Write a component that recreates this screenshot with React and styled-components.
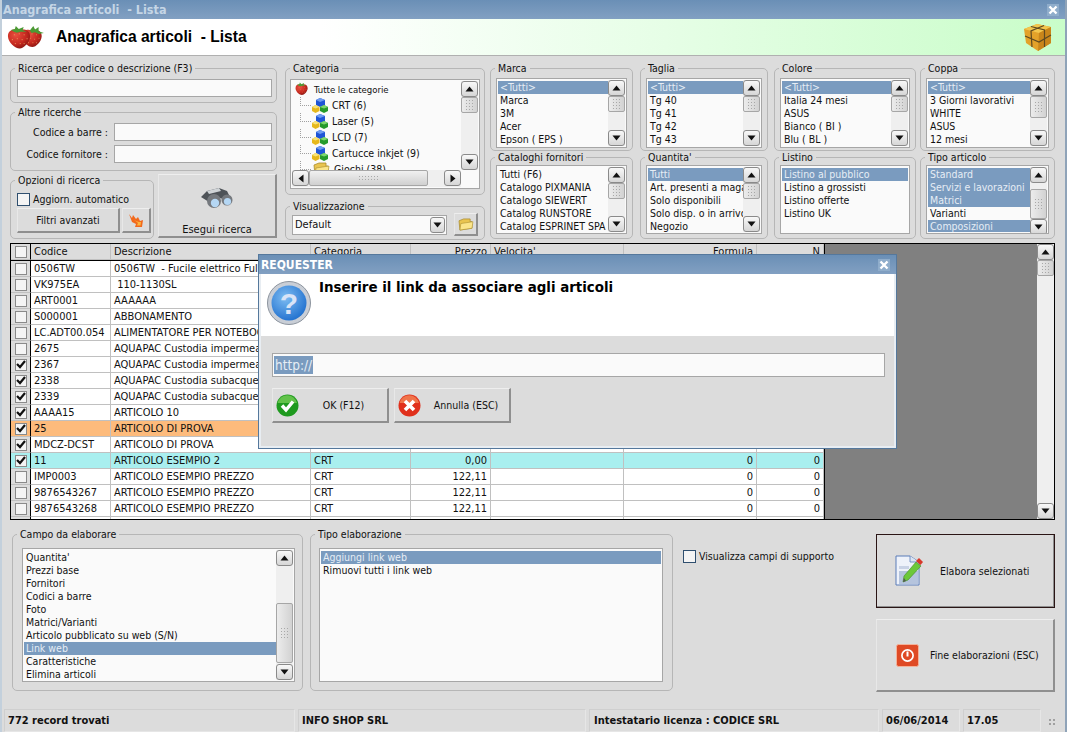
import React from 'react';
import styled, { createGlobalStyle } from 'styled-components';

const GlobalStyle = createGlobalStyle`
  html, body {
    margin: 0;
    padding: 0;
    background: #dcdcdc;
    overflow: hidden;
  }
  body {
    font-family: "DejaVu Sans Condensed", "DejaVu Sans", "Liberation Sans", sans-serif;
    font-size: 10.5px;
    color: #111111;
  }
`;

const Window = styled.div`
  position: relative;
  box-sizing: border-box;
  width: 1067px;
  height: 732px;
  display: flex;
  flex-direction: column;
  background: #dcdcdc;
  overflow: hidden;
  border-right: 2px solid #8fa3b8;
  border-left: 2px solid #c3d0dc;
`;

const TitleBar = styled.div`
  height: 19px;
  margin: 0 -2px;
  flex: none;
  display: flex;
  align-items: center;
  justify-content: space-between;
  padding: 0 8px 0 3px;
  background: linear-gradient(#6a8fb6, #82a0c2);
  color: #c5d6e6;
  font-size: 12.5px;
  font-weight: 700;
  white-space: pre;
`;

const CloseBox = styled.span`
  width: 12px;
  height: 12px;
  display: flex;
  align-items: center;
  justify-content: center;
  background: #8fadcb;
`;

const Banner = styled.div`
  height: 36px;
  flex: none;
  display: flex;
  align-items: center;
  padding: 0 12px 0 5px;
  background: linear-gradient(90deg, #ffffff 0%, #ffffff 30%, #c9fdc9 100%);
  border-bottom: 1px solid #b0b0b0;
`;

const BannerTitle = styled.h1`
  flex: 1;
  margin: 0 0 0 11px;
  font-family: "Liberation Sans", Arial, sans-serif;
  font-size: 15.6px;
  font-weight: 700;
  color: #000000;
  white-space: pre;
`;

const Filters = styled.div`
  box-sizing: border-box;
  height: 184px;
  flex: none;
  display: flex;
  padding: 6px 0 0 8px;
`;

const Column = styled.div`
  width: ${(p) => p.$w}px;
  flex: none;
  display: flex;
  flex-direction: column;
  gap: ${(p) => p.$gap || 0}px;
  margin-right: ${(p) => p.$mr || 0}px;
`;

const Group = styled.fieldset`
  box-sizing: border-box;
  margin: 0;
  min-width: 0;
  width: ${(p) => (p.$w ? `${p.$w}px` : '100%')};
  height: ${(p) => p.$h}px;
  flex: none;
  padding: 0;
  border: 1px solid #b6b6b6;
  border-radius: 5px;
`;

const Legend = styled.legend`
  padding: 0 3px;
  margin-left: 4px;
  line-height: 13px;
`;

const GroupBody = styled.div`
  padding: ${(p) => p.$pad || '3px 5px 0 5px'};
`;

const TextField = styled.div`
  box-sizing: border-box;
  height: ${(p) => p.$h || 18}px;
  width: ${(p) => (p.$w ? `${p.$w}px` : 'auto')};
  background: #fafafa;
  border: 1.5px solid #a6a6a6;
`;

const FieldRow = styled.div`
  display: flex;
  align-items: center;
  justify-content: flex-end;
  gap: 6px;
  margin-bottom: 4px;
`;

const OptionsRow = styled.div`
  display: flex;
  gap: 4px;
`;

const FilterBtns = styled.div`
  display: flex;
  gap: 2px;
  margin-top: 2px;
`;

const CheckLine = styled.label`
  display: flex;
  align-items: center;
  gap: 3px;
  height: 14px;
`;

const CheckBox = styled.span`
  box-sizing: border-box;
  width: ${(p) => p.$s || 13}px;
  height: ${(p) => p.$s || 13}px;
  flex: none;
  display: flex;
  align-items: center;
  justify-content: center;
  background: #f4f4f4;
  border: 1px solid ${(p) => p.$border || '#8a8a8a'};
`;

const Btn = styled.div`
  box-sizing: border-box;
  width: ${(p) => (p.$w ? `${p.$w}px` : 'auto')};
  height: ${(p) => p.$h}px;
  flex: none;
  display: flex;
  align-items: center;
  justify-content: center;
  gap: ${(p) => p.$gap || 0}px;
  background: #dcdcdc;
  border-style: solid;
  border-width: 1px 2px 2px 1px;
  border-color: #eeeeee #8f8f8f #8f8f8f #e8e8e8;
  outline: ${(p) => (p.$default ? '1px solid #2a1515' : 'none')};
  outline-offset: -1px;
`;

const SearchBtn = styled(Btn)`
  flex-direction: column;
  justify-content: flex-end;
  gap: 14px;
  font-size: 11px;
`;

const ListFrame = styled.div`
  box-sizing: border-box;
  height: ${(p) => p.$h}px;
  display: flex;
  padding: 1px;
  background: #fafafa;
  border: 1.5px solid #a6a6a6;
  overflow: hidden;
`;

const ListRows = styled.div`
  flex: 1;
  min-width: 0;
  padding-top: 1px;
  overflow: hidden;
`;

const ListRow = styled.div`
  height: 13px;
  line-height: 13px;
  padding-left: 2px;
  white-space: nowrap;
  overflow: hidden;
  background: ${(p) => (p.$on ? '#7a9bbf' : 'transparent')};
  color: ${(p) => (p.$on ? '#e6edf5' : '#111111')};
`;

const VBar = styled.div`
  width: 17px;
  flex: none;
  display: flex;
  flex-direction: column;
  background: #efefef;
`;

const HBar = styled.div`
  height: 17px;
  flex: none;
  display: flex;
  background: #efefef;
  margin-right: 17px;
`;

const ArrowBtn = styled.div`
  box-sizing: border-box;
  width: 17px;
  height: 16px;
  flex: none;
  display: flex;
  align-items: center;
  justify-content: center;
  background: linear-gradient(#f8f8f8, #d6d6d6);
  border: 1px solid #8a8a8a;
  border-radius: 3px;
`;

const Thumb = styled.div`
  box-sizing: border-box;
  flex: none;
  ${(p) => (p.$horizontal ? `width: ${p.$size}px; height: 16px;` : `height: ${p.$size}px;`)}
  margin-${(p) => (p.$horizontal ? 'left' : 'top')}: ${(p) => p.$before || 0}px;
  display: flex;
  align-items: center;
  justify-content: center;
  background: linear-gradient(${(p) => (p.$horizontal ? '#f0f0f0, #d0d0d0' : '90deg, #ececec, #d2d2d2')});
  border: 1px solid #a6a6a6;
  border-radius: 2px;
`;

const Grip = styled.span`
  width: ${(p) => (p.$horizontal ? 21 : 9)}px;
  height: ${(p) => (p.$horizontal ? 6 : 12)}px;
  background-image: radial-gradient(#a8a8a8 0.7px, transparent 0.8px);
  background-size: 3px 3px;
`;

const Spacer = styled.div`
  flex: 1;
`;

const TreeFrame = styled.div`
  box-sizing: border-box;
  height: ${(p) => p.$h}px;
  display: flex;
  flex-direction: column;
  padding: 1px;
  background: #fafafa;
  border: 1.5px solid #a6a6a6;
`;

const TreeBody = styled.div`
  flex: 1;
  min-height: 0;
  display: flex;
  overflow: hidden;
`;

const TreeRows = styled.div`
  flex: 1;
  overflow: hidden;
`;

const TreeRow = styled.div`
  height: 16px;
  display: flex;
  align-items: center;
  gap: ${(p) => (p.$root ? 5 : 1)}px;
  padding-left: ${(p) => (p.$root ? 3 : 8)}px;
  white-space: nowrap;
  font-size: ${(p) => (p.$root ? 9.5 : 10.5)}px;
`;

const TreeDots = styled.span`
  align-self: stretch;
  width: 10px;
  height: 8px;
  border-left: 1px dotted #a0a0a0;
  border-bottom: 1px dotted #a0a0a0;
`;

const TreeLabel = styled.span`
  margin-left: 3px;
`;

const SelectRow = styled.div`
  display: flex;
  align-items: center;
  gap: 7px;
  padding: 0 0 0 6px;
`;

const SelectBox = styled.div`
  box-sizing: border-box;
  width: 155px;
  height: 20px;
  display: flex;
  align-items: center;
  justify-content: space-between;
  padding: 0 1px 0 2px;
  background: #fafafa;
  border: 1.5px solid #a6a6a6;
  font-size: 11px;
`;

const SelectArrow = styled(ArrowBtn)`
  width: 15px;
  height: 16px;
`;

const TableBox = styled.div`
  box-sizing: border-box;
  height: 277px;
  flex: none;
  margin: 3px 10px 0 8px;
  display: flex;
  border: 1px solid #000000;
  background: #808080;
  overflow: hidden;
  font-size: 11px;
`;

const Grid = styled.div`
  width: 814px;
  flex: none;
  background: #ffffff;
  border-right: 1px solid #000000;
  box-sizing: border-box;
`;

const HeadRow = styled.div`
  display: grid;
  grid-template-columns: 20px 80px 200px 100px 80px 133px 133px 67px;
  height: 16px;
  background: #dcdcdc;
  border-bottom: 1px solid #000000;
`;

const BodyRow = styled.div`
  display: grid;
  grid-template-columns: 20px 80px 200px 100px 80px 133px 133px 67px;
  height: 16px;
  box-sizing: border-box;
  background: ${(p) => p.$bg || '#ffffff'};
`;

const Cell = styled.div`
  box-sizing: border-box;
  padding: 0 3px;
  line-height: 15px;
  white-space: pre;
  overflow: hidden;
  text-align: ${(p) => (p.$right ? 'right' : 'left')};
  border-right: 1px solid #c0c0c0;
  border-bottom: 1px solid #c0c0c0;
`;

const TickCell = styled.div`
  box-sizing: border-box;
  display: flex;
  align-items: center;
  justify-content: center;
  background: ${(p) => p.$bg || '#dcdcdc'};
  border-right: 1px solid #000000;
  border-bottom: 1px solid #c0c0c0;
`;

const GrayArea = styled.div`
  flex: 1;
`;

const Bottom = styled.div`
  flex: none;
  display: flex;
  padding: 8px 10px 0 10px;
  height: 189px;
  box-sizing: border-box;
`;

const TipoGroup = styled(Group)`
  margin-left: 7px;
`;

const SupportCheck = styled(CheckLine)`
  margin: 21px 0 0 10px;
  align-self: flex-start;
`;

const ActionColumn = styled.div`
  margin-left: auto;
  padding-top: 6px;
  width: 179px;
  display: flex;
  flex-direction: column;
  gap: 11px;
`;

const ActionBtn = styled(Btn)`
  justify-content: flex-start;
  padding-left: ${(p) => p.$pl}px;
  gap: ${(p) => p.$gap}px;
`;

const StatusBar = styled.div`
  height: 23px;
  flex: none;
  display: flex;
  gap: 3px;
  padding-left: 2px;
  font-size: 11px;
`;

const StatusCell = styled.div`
  box-sizing: border-box;
  width: ${(p) => p.$w}px;
  display: flex;
  align-items: center;
  padding-left: ${(p) => p.$pl || 3}px;
  font-weight: 700;
  border: 1px solid #cfcfcf;
  border-right-color: #e6e6e6;
  border-bottom-color: #e6e6e6;
`;

const SizeGrip = styled.span`
  width: 8px;
  height: 8px;
  margin: 9px 0 0 4px;
  background-image: radial-gradient(#a0a0a0 0.8px, transparent 0.9px);
  background-size: 4px 4px;
`;

const Dialog = styled.div`
  position: absolute;
  left: 256px;
  top: 254px;
  box-sizing: border-box;
  width: 639px;
  height: 195px;
  display: flex;
  flex-direction: column;
  background: #dcdcdc;
  border: 1px solid #55789c;
  box-shadow: inset 0 0 0 2px #e8edf2;
`;

const DialogTitle = styled(TitleBar)`
  height: 19px;
  margin: 0;
  color: #ffffff;
  padding: 0 6px 0 2px;
  font-size: 12px;
`;

const DialogHead = styled.div`
  height: 62px;
  flex: none;
  display: flex;
  gap: 7px;
  padding: 5px 2px 0 5px;
  margin: 0 2px;
  background: #ffffff;
  box-sizing: border-box;
`;

const DialogText = styled.div`
  font-size: 14.9px;
  font-weight: 700;
  line-height: 15px;
  padding-top: 1px;
  color: #000000;
`;

const DialogBody = styled.div`
  padding: 17px 11px 0 13px;
  display: flex;
  flex-direction: column;
  gap: 11px;
`;

const UrlField = styled(TextField)`
  height: 24px;
  display: flex;
  align-items: center;
  padding-left: 1px;
  font-size: 13.5px;
`;

const Marked = styled.span`
  background: #7a9bbf;
  color: #e6edf5;
  padding: 1px;
`;

const DialogBtns = styled.div`
  display: flex;
  gap: 5px;
`;

const DialogBtnLabel = styled.span`
  flex: 1;
  text-align: center;
  padding-left: ${(p) => p.$pl || 0}px;
`;

const DialogBtn = styled(Btn)`
  padding: 0 3px;
`;

const Up = () => (
  <svg width="9" height="6" viewBox="0 0 9 6"><path d="M4.5 0.5 L8.5 5.5 H0.5 Z" fill="#111" /></svg>
);
const Down = () => (
  <svg width="9" height="6" viewBox="0 0 9 6"><path d="M0.5 0.5 H8.5 L4.5 5.5 Z" fill="#111" /></svg>
);
const Left = () => (
  <svg width="6" height="9" viewBox="0 0 6 9"><path d="M5.5 0.5 V8.5 L0.5 4.5 Z" fill="#111" /></svg>
);
const Right = () => (
  <svg width="6" height="9" viewBox="0 0 6 9"><path d="M0.5 0.5 L5.5 4.5 L0.5 8.5 Z" fill="#111" /></svg>
);

const Tick = () => (
  <svg width="10" height="9" viewBox="0 0 10 9">
    <path d="M1 4 L4 7 L9 1" fill="none" stroke="#111" strokeWidth="2.2" />
  </svg>
);

const CloseX = () => (
  <svg width="10" height="10" viewBox="0 0 10 10">
    <path d="M1.5 1.5 L8.5 8.5 M8.5 1.5 L1.5 8.5" stroke="#fff" strokeWidth="2.4" />
  </svg>
);

const BerryDefs = () => (
  <defs>
    <radialGradient id="berry" cx="0.35" cy="0.3" r="0.8">
      <stop offset="0" stopColor="#e8503f" />
      <stop offset="0.6" stopColor="#c5281f" />
      <stop offset="1" stopColor="#7d1410" />
    </radialGradient>
  </defs>
);

const Strawberry = ({ scale = 1, x = 0, y = 0, leafRight }) => (
  <g transform={`translate(${x} ${y}) scale(${scale})`}>
    <path d="M12 5 C18 3 24 6 23.5 12 C23 18 17 24 13 24 C8 24 1.5 18 1 12 C0.5 6 6 3 12 5 Z" fill="url(#berry)" />
    <path d="M7 10 h1 M12 9 h1 M17 10 h1 M5 15 h1 M10 14 h1 M15 15 h1 M20 14 h1 M8 19 h1 M13 19 h1 M17 19 h1" stroke="#f1b36a" strokeWidth="0.8" />
    {leafRight ? (
      <path d="M10 5 L14 0 L16 4 L20 1 L20 6 L26 8 L20 9 L16 7 L12 8 Z" fill="#4c9a34" />
    ) : (
      <path d="M4 5 L8 4 L9 1 L12 4 L17 2 L16 5 L20 7 L14 7 L10 8 L7 7 Z" fill="#4c9a34" />
    )}
  </g>
);

const LogoBerries = () => (
  <svg width="38" height="26" viewBox="0 0 38 26">
    <BerryDefs />
    <Strawberry scale={0.88} x={14} y={2} leafRight />
    <Strawberry scale={0.98} x={0} y={1} />
  </svg>
);

const CubeGold = () => (
  <svg width="30" height="30" viewBox="0 0 30 30">
    <path d="M14 2 L28 5 L28 21 L15 29 L3 21 L1 7 Z" fill="#e3a22a" />
    <path d="M14 2 L28 5 L16 11 L1 7 Z" fill="#f2c64e" />
    <path d="M16 11 L28 5 L28 21 L15 29 Z" fill="#c9861a" />
    <path d="M8 4.5 L21.5 8 V25 M21 3.5 L8 9 L9 25 M2 14 L16 20 L28 13" fill="none" stroke="#5f4a20" strokeWidth="1.2" />
  </svg>
);

const MiniCubes = () => (
  <svg width="16" height="15" viewBox="0 0 16 15">
    <path d="M4 2 L8 0 L13 2 V7 L8 9 L4 7 Z" fill="#1f55d6" />
    <path d="M4 2 L8 0 L13 2 L8 4 Z" fill="#6f9cf0" />
    <path d="M0 9 L3.5 7 L7.5 9 V13 L3.5 15 L0 13 Z" fill="#e6b81c" />
    <path d="M0 9 L3.5 7 L7.5 9 L3.5 10.5 Z" fill="#f7e27a" />
    <path d="M8 9 L12 7 L16 9 V13 L12 15 L8 13 Z" fill="#259a2a" />
    <path d="M8 9 L12 7 L16 9 L12 10.5 Z" fill="#7fd66f" />
  </svg>
);

const FolderIcon = ({ size = 14 }) => (
  <svg width={size + 4} height={size} viewBox="0 0 18 14">
    <path d="M2 3 L7 1 L14 1 V4 H16 V11 L3 13 Z" fill="#e9c44f" stroke="#a88b2c" strokeWidth="0.8" />
    <path d="M3 13 L4 6 L17 4 L16 11 Z" fill="#fbe58a" stroke="#a88b2c" strokeWidth="0.6" />
  </svg>
);

const Binoculars = () => (
  <svg width="32" height="21" viewBox="0 0 32 21">
    <path d="M0 9 L6 3 L18 0 L26 3 L31 13 L22 11 L16 9 L8 14 Z" fill="#4e5358" />
    <path d="M6 3 L18 0 L20 3 L8 6 Z" fill="#cfd3d6" />
    <circle cx="13" cy="13" r="7" fill="#75797e" />
    <circle cx="26" cy="12" r="5.5" fill="#75797e" />
    <circle cx="14" cy="15" r="4.2" fill="#b5d7f4" />
    <circle cx="26.5" cy="13.5" r="3.6" fill="#b5d7f4" />
  </svg>
);

const Flame = () => (
  <svg width="16" height="15" viewBox="0 0 16 15">
    <path d="M1 1 L4 5 L5 2 L8 6 L10 4 L12 8 L15 7 L14 14 L7 14 L8 11 L4 9 Z" fill="#f2691c" />
    <path d="M5 6 L8 8 L11 9 L13 9 L12.5 12.5 L9 12.5 L10 10 Z" fill="#fcb53c" />
  </svg>
);

const QuestionIcon = () => (
  <svg width="46" height="48" viewBox="0 0 46 48">
    <defs>
      <radialGradient id="qblue" cx="0.4" cy="0.35" r="0.7">
        <stop offset="0" stopColor="#7dbcf2" />
        <stop offset="1" stopColor="#1f6fce" />
      </radialGradient>
    </defs>
    <circle cx="23" cy="24" r="21.5" fill="#c9ced6" stroke="#8c949e" strokeWidth="1" />
    <circle cx="23" cy="24" r="17.5" fill="url(#qblue)" />
    <text x="23" y="35" textAnchor="middle" fontFamily="Liberation Sans, sans-serif" fontSize="30" fontWeight="700" fill="#d9e4f7">?</text>
  </svg>
);

const OkIcon = () => (
  <svg width="23" height="23" viewBox="0 0 23 23">
    <circle cx="11.5" cy="11.5" r="11" fill="#1f9a1f" />
    <path d="M1.5 9 A10 10 0 0 1 21 9 Z" fill="#62c24a" />
    <path d="M6 11.5 L10 16 L17 7.5" fill="none" stroke="#ffffff" strokeWidth="3.4" />
  </svg>
);

const CancelIcon = () => (
  <svg width="23" height="23" viewBox="0 0 23 23">
    <circle cx="11.5" cy="11.5" r="11" fill="#e0301c" />
    <path d="M1.5 9 A10 10 0 0 1 21 9 Z" fill="#f0744a" />
    <path d="M7 7 L16 16 M16 7 L7 16" stroke="#ffffff" strokeWidth="3.6" />
  </svg>
);

const EditDocIcon = () => (
  <svg width="28" height="31" viewBox="0 0 28 31">
    <path d="M1 1 H15 L24 7 V30 H1 Z" fill="#eef2fa" stroke="#5b7db8" strokeWidth="1" />
    <path d="M15 1 V7 H24" fill="#dbe4f3" stroke="#5b7db8" strokeWidth="0.8" />
    <path d="M4 16 H23 V29 H4 Z" fill="#b5c4dd" />
    <path d="M4 11 H14 V14 H4 Z" fill="#c9d3e6" />
    <path d="M21 7 L26 11 L13 25 L8 27 L9 21 Z" fill="#6cc83a" stroke="#3f8a26" strokeWidth="0.6" />
    <path d="M21 6 L24 3 L28 7 L25.5 10 Z" fill="#d8382a" />
    <path d="M8 27 L9 23 L11 26 Z" fill="#555" />
  </svg>
);

const PowerIcon = () => (
  <svg width="23" height="23" viewBox="0 0 23 23">
    <rect x="0.5" y="0.5" width="22" height="22" rx="2" fill="#df4a25" stroke="#f4b29a" />
    <circle cx="11.5" cy="11.5" r="5.6" fill="none" stroke="#ffffff" strokeWidth="1.7" />
    <path d="M11.5 7.5 V12.5" stroke="#ffffff" strokeWidth="2" />
  </svg>
);

function VScroll({ before = 0, size = 16 }) {
  return (
    <VBar>
      <ArrowBtn><Up /></ArrowBtn>
      <Thumb $before={before} $size={size}><Grip /></Thumb>
      <Spacer />
      <ArrowBtn><Down /></ArrowBtn>
    </VBar>
  );
}

function ListBox({ h, items, selected = [], scroll }) {
  return (
    <ListFrame $h={h}>
      <ListRows>
        {items.map((item, i) => (
          <ListRow key={item} $on={selected.includes(i)}>{item}</ListRow>
        ))}
      </ListRows>
      {scroll && <VScroll before={scroll.before} size={scroll.size} />}
    </ListFrame>
  );
}

const filterColumns = [
  {
    w: 150,
    groups: [
      { w: 143, title: 'Marca', items: ['<Tutti>', 'Marca', '3M', 'Acer', 'Epson ( EPS )'], selected: [0], scroll: { size: 16 } },
      { w: 143, title: 'Cataloghi fornitori', items: ['Tutti (F6)', 'Catalogo PIXMANIA', 'Catalogo SIEWERT', 'Catalog RUNSTORE', 'Catalog ESPRINET SPA'], scroll: { size: 16 } },
    ],
  },
  {
    w: 134,
    groups: [
      { w: 128, title: 'Taglia', items: ['<Tutti>', 'Tg 40', 'Tg 41', 'Tg 42', 'Tg 43'], selected: [0], scroll: { size: 16 } },
      { w: 128, title: "Quantita'", items: ['Tutti', 'Art. presenti a magazzino', 'Solo disponibili', 'Solo disp. o in arrivo', 'Negozio'], selected: [0], scroll: { size: 16 } },
    ],
  },
  {
    w: 146,
    groups: [
      { w: 142, title: 'Colore', items: ['<Tutti>', 'Italia 24 mesi', 'ASUS', 'Bianco ( BI )', 'Blu ( BL )'], selected: [0], scroll: { size: 16 } },
      { w: 142, title: 'Listino', items: ['Listino al pubblico', 'Listino a grossisti', 'Listino offerte', 'Listino UK'], selected: [0] },
    ],
  },
  {
    w: 135,
    groups: [
      { w: 135, title: 'Coppa', items: ['<Tutti>', '3 Giorni lavorativi', 'WHITE', 'ASUS', '12 mesi'], selected: [0], scroll: { size: 22 } },
      { w: 135, title: 'Tipo articolo', items: ['Standard', 'Servizi e lavorazioni', 'Matrici', 'Varianti', 'Composizioni'], selected: [0, 1, 2, 4], scroll: { before: 6, size: 30 } },
    ],
  },
];

const rows = [
  { tick: false, code: '0506TW', desc: '0506TW  - Fucile elettrico Full Metal' },
  { tick: false, code: 'VK975EA', desc: ' 110-1130SL' },
  { tick: false, code: 'ART0001', desc: 'AAAAAA' },
  { tick: false, code: 'S000001', desc: 'ABBONAMENTO' },
  { tick: false, code: 'LC.ADT00.054', desc: 'ALIMENTATORE PER NOTEBOOK' },
  { tick: false, code: '2675', desc: 'AQUAPAC Custodia impermeabile' },
  { tick: true, code: '2367', desc: 'AQUAPAC Custodia impermeabile' },
  { tick: true, code: '2338', desc: 'AQUAPAC Custodia subacquea' },
  { tick: true, code: '2339', desc: 'AQUAPAC Custodia subacquea' },
  { tick: true, code: 'AAAA15', desc: 'ARTICOLO 10' },
  { tick: true, code: '25', desc: 'ARTICOLO DI PROVA', bg: '#fdbb7c' },
  { tick: true, code: 'MDCZ-DCST', desc: 'ARTICOLO DI PROVA' },
  { tick: true, code: '11', desc: 'ARTICOLO ESEMPIO 2', cat: 'CRT', price: '0,00', bg: '#a9efef' },
  { tick: false, code: 'IMP0003', desc: 'ARTICOLO ESEMPIO PREZZO', cat: 'CRT', price: '122,11' },
  { tick: false, code: '9876543267', desc: 'ARTICOLO ESEMPIO PREZZO', cat: 'CRT', price: '122,11' },
  { tick: false, code: '9876543268', desc: 'ARTICOLO ESEMPIO PREZZO', cat: 'CRT', price: '122,11' },
  { tick: false, code: '', desc: '' },
];

const treeItems = ['CRT (6)', 'Laser (5)', 'LCD (7)', 'Cartucce inkjet (9)'];

export default function App() {
  return (
    <Window>
      <GlobalStyle />
      <TitleBar>
        <span>Anagrafica articoli  - Lista</span>
        <CloseBox><CloseX /></CloseBox>
      </TitleBar>
      <Banner>
        <LogoBerries />
        <BannerTitle>Anagrafica articoli  - Lista</BannerTitle>
        <CubeGold />
      </Banner>

      <Filters>
        <Column $w={267} $mr={8} $gap={3}>
          <Group $h={41}>
            <Legend>Ricerca per codice o descrizione (F3)</Legend>
            <GroupBody $pad="4px 4px 0 6px">
              <TextField />
            </GroupBody>
          </Group>
          <Group $h={65}>
            <Legend>Altre ricerche</Legend>
            <GroupBody $pad="4px 4px 0 6px">
              <FieldRow>
                <span>Codice a barre :</span>
                <TextField $w={158} />
              </FieldRow>
              <FieldRow>
                <span>Codice fornitore :</span>
                <TextField $w={158} />
              </FieldRow>
            </GroupBody>
          </Group>
          <OptionsRow>
            <Group $w={144} $h={65}>
              <Legend>Opzioni di ricerca</Legend>
              <GroupBody $pad="5px 3px 0 6px">
                <CheckLine>
                  <CheckBox $border="#2f4f6f"></CheckBox>
                  <span>Aggiorn. automatico</span>
                </CheckLine>
                <FilterBtns>
                  <Btn $w={103} $h={25}>Filtri avanzati</Btn>
                  <Btn $w={29} $h={25}><Flame /></Btn>
                </FilterBtns>
              </GroupBody>
            </Group>
            <SearchBtn $w={119} $h={64}>
              <Binoculars />
              <span>Esegui ricerca</span>
            </SearchBtn>
          </OptionsRow>
        </Column>

        <Column $w={200} $mr={5} $gap={5}>
          <Group $h={133}>
            <Legend>Categoria</Legend>
            <GroupBody $pad="4px 4px 0 4px">
              <TreeFrame $h={110}>
                <TreeBody>
                  <TreeRows>
                    <TreeRow $root>
                      <svg width="14" height="16" viewBox="0 0 26 26"><BerryDefs /><Strawberry /></svg>
                      Tutte le categorie
                    </TreeRow>
                    {treeItems.map((item) => (
                      <TreeRow key={item}>
                        <TreeDots />
                        <MiniCubes />
                        <TreeLabel>{item}</TreeLabel>
                      </TreeRow>
                    ))}
                    <TreeRow>
                      <TreeDots />
                      <FolderIcon />
                      <TreeLabel>Giochi (38)</TreeLabel>
                    </TreeRow>
                  </TreeRows>
                  <VScroll size={16} />
                </TreeBody>
                <HBar>
                  <ArrowBtn><Left /></ArrowBtn>
                  <Thumb $horizontal $size={119}><Grip $horizontal /></Thumb>
                  <Spacer />
                  <ArrowBtn><Right /></ArrowBtn>
                </HBar>
              </TreeFrame>
            </GroupBody>
          </Group>
          <Group $h={40}>
            <Legend>Visualizzazione</Legend>
            <SelectRow>
              <SelectBox>
                <span>Default</span>
                <SelectArrow><Down /></SelectArrow>
              </SelectBox>
              <Btn $w={24} $h={23}><FolderIcon size={13} /></Btn>
            </SelectRow>
          </Group>
        </Column>

        {filterColumns.map((col) => (
          <Column key={col.groups[0].title} $w={col.w}>
            <Group $w={col.groups[0].w} $h={89}>
              <Legend>{col.groups[0].title}</Legend>
              <GroupBody>
                <ListBox h={70} {...col.groups[0]} />
              </GroupBody>
            </Group>
            <Group $w={col.groups[1].w} $h={88}>
              <Legend>{col.groups[1].title}</Legend>
              <GroupBody $pad="1px 5px 0 5px">
                <ListBox h={69} {...col.groups[1]} />
              </GroupBody>
            </Group>
          </Column>
        ))}
      </Filters>

      <TableBox>
        <Grid>
          <HeadRow>
            <TickCell><CheckBox $s={12} /></TickCell>
            <Cell>Codice</Cell>
            <Cell>Descrizione</Cell>
            <Cell>Categoria</Cell>
            <Cell $right>Prezzo</Cell>
            <Cell>Velocita'</Cell>
            <Cell $right>Formula</Cell>
            <Cell $right>N</Cell>
          </HeadRow>
          {rows.map((r, i) => (
            <BodyRow key={i} $bg={r.bg}>
              <TickCell $bg={r.bg}>
                <CheckBox $s={12}>{r.tick && <Tick />}</CheckBox>
              </TickCell>
              <Cell>{r.code}</Cell>
              <Cell>{r.desc}</Cell>
              <Cell>{r.cat}</Cell>
              <Cell $right>{r.price}</Cell>
              <Cell />
              <Cell $right>{r.cat ? '0' : ''}</Cell>
              <Cell $right>{r.cat ? '0' : ''}</Cell>
            </BodyRow>
          ))}
        </Grid>
        <GrayArea />
        <VScroll size={16} />
      </TableBox>

      <Bottom>
        <Group $w={291} $h={163}>
          <Legend>Campo da elaborare</Legend>
          <GroupBody $pad="7px 7px 0 9px">
            <ListBox
              h={134}
              items={['Quantita\'', 'Prezzi base', 'Fornitori', 'Codici a barre', 'Foto', 'Matrici/Varianti', 'Articolo pubblicato su web (S/N)', 'Link web', 'Caratteristiche', 'Elimina articoli']}
              selected={[7]}
              scroll={{ before: 37, size: 60 }}
            />
          </GroupBody>
        </Group>
        <TipoGroup $w={363} $h={163}>
          <Legend>Tipo elaborazione</Legend>
          <GroupBody $pad="7px 9px 0 8px">
            <ListBox h={134} items={['Aggiungi link web', 'Rimuovi tutti i link web']} selected={[0]} />
          </GroupBody>
        </TipoGroup>
        <SupportCheck>
          <CheckBox $border="#2f4f6f" />
          <span>Visualizza campi di supporto</span>
        </SupportCheck>
        <ActionColumn>
          <ActionBtn $h={74} $default $pl={18} $gap={17}>
            <EditDocIcon />
            <span>Elabora selezionati</span>
          </ActionBtn>
          <ActionBtn $h={73} $pl={19} $gap={11}>
            <PowerIcon />
            <span>Fine elaborazioni (ESC)</span>
          </ActionBtn>
        </ActionColumn>
      </Bottom>

      <StatusBar>
        <StatusCell $w={291}>772 record trovati</StatusCell>
        <StatusCell $w={288}>INFO SHOP SRL</StatusCell>
        <StatusCell $w={290} $pl={4}>Intestatario licenza : CODICE SRL</StatusCell>
        <StatusCell $w={78}>06/06/2014</StatusCell>
        <StatusCell $w={78}>17.05</StatusCell>
        <SizeGrip />
      </StatusBar>

      <Dialog>
        <DialogTitle>
          <span>REQUESTER</span>
          <CloseBox><CloseX /></CloseBox>
        </DialogTitle>
        <DialogHead>
          <QuestionIcon />
          <DialogText>Inserire il link da associare agli articoli</DialogText>
        </DialogHead>
        <DialogBody>
          <UrlField><Marked>http://</Marked></UrlField>
          <DialogBtns>
            <DialogBtn $w={117} $h={35}>
              <OkIcon />
              <DialogBtnLabel $pl={4}>OK (F12)</DialogBtnLabel>
            </DialogBtn>
            <DialogBtn $w={117} $h={35}>
              <CancelIcon />
              <DialogBtnLabel $pl={5}>Annulla (ESC)</DialogBtnLabel>
            </DialogBtn>
          </DialogBtns>
        </DialogBody>
      </Dialog>
    </Window>
  );
}
